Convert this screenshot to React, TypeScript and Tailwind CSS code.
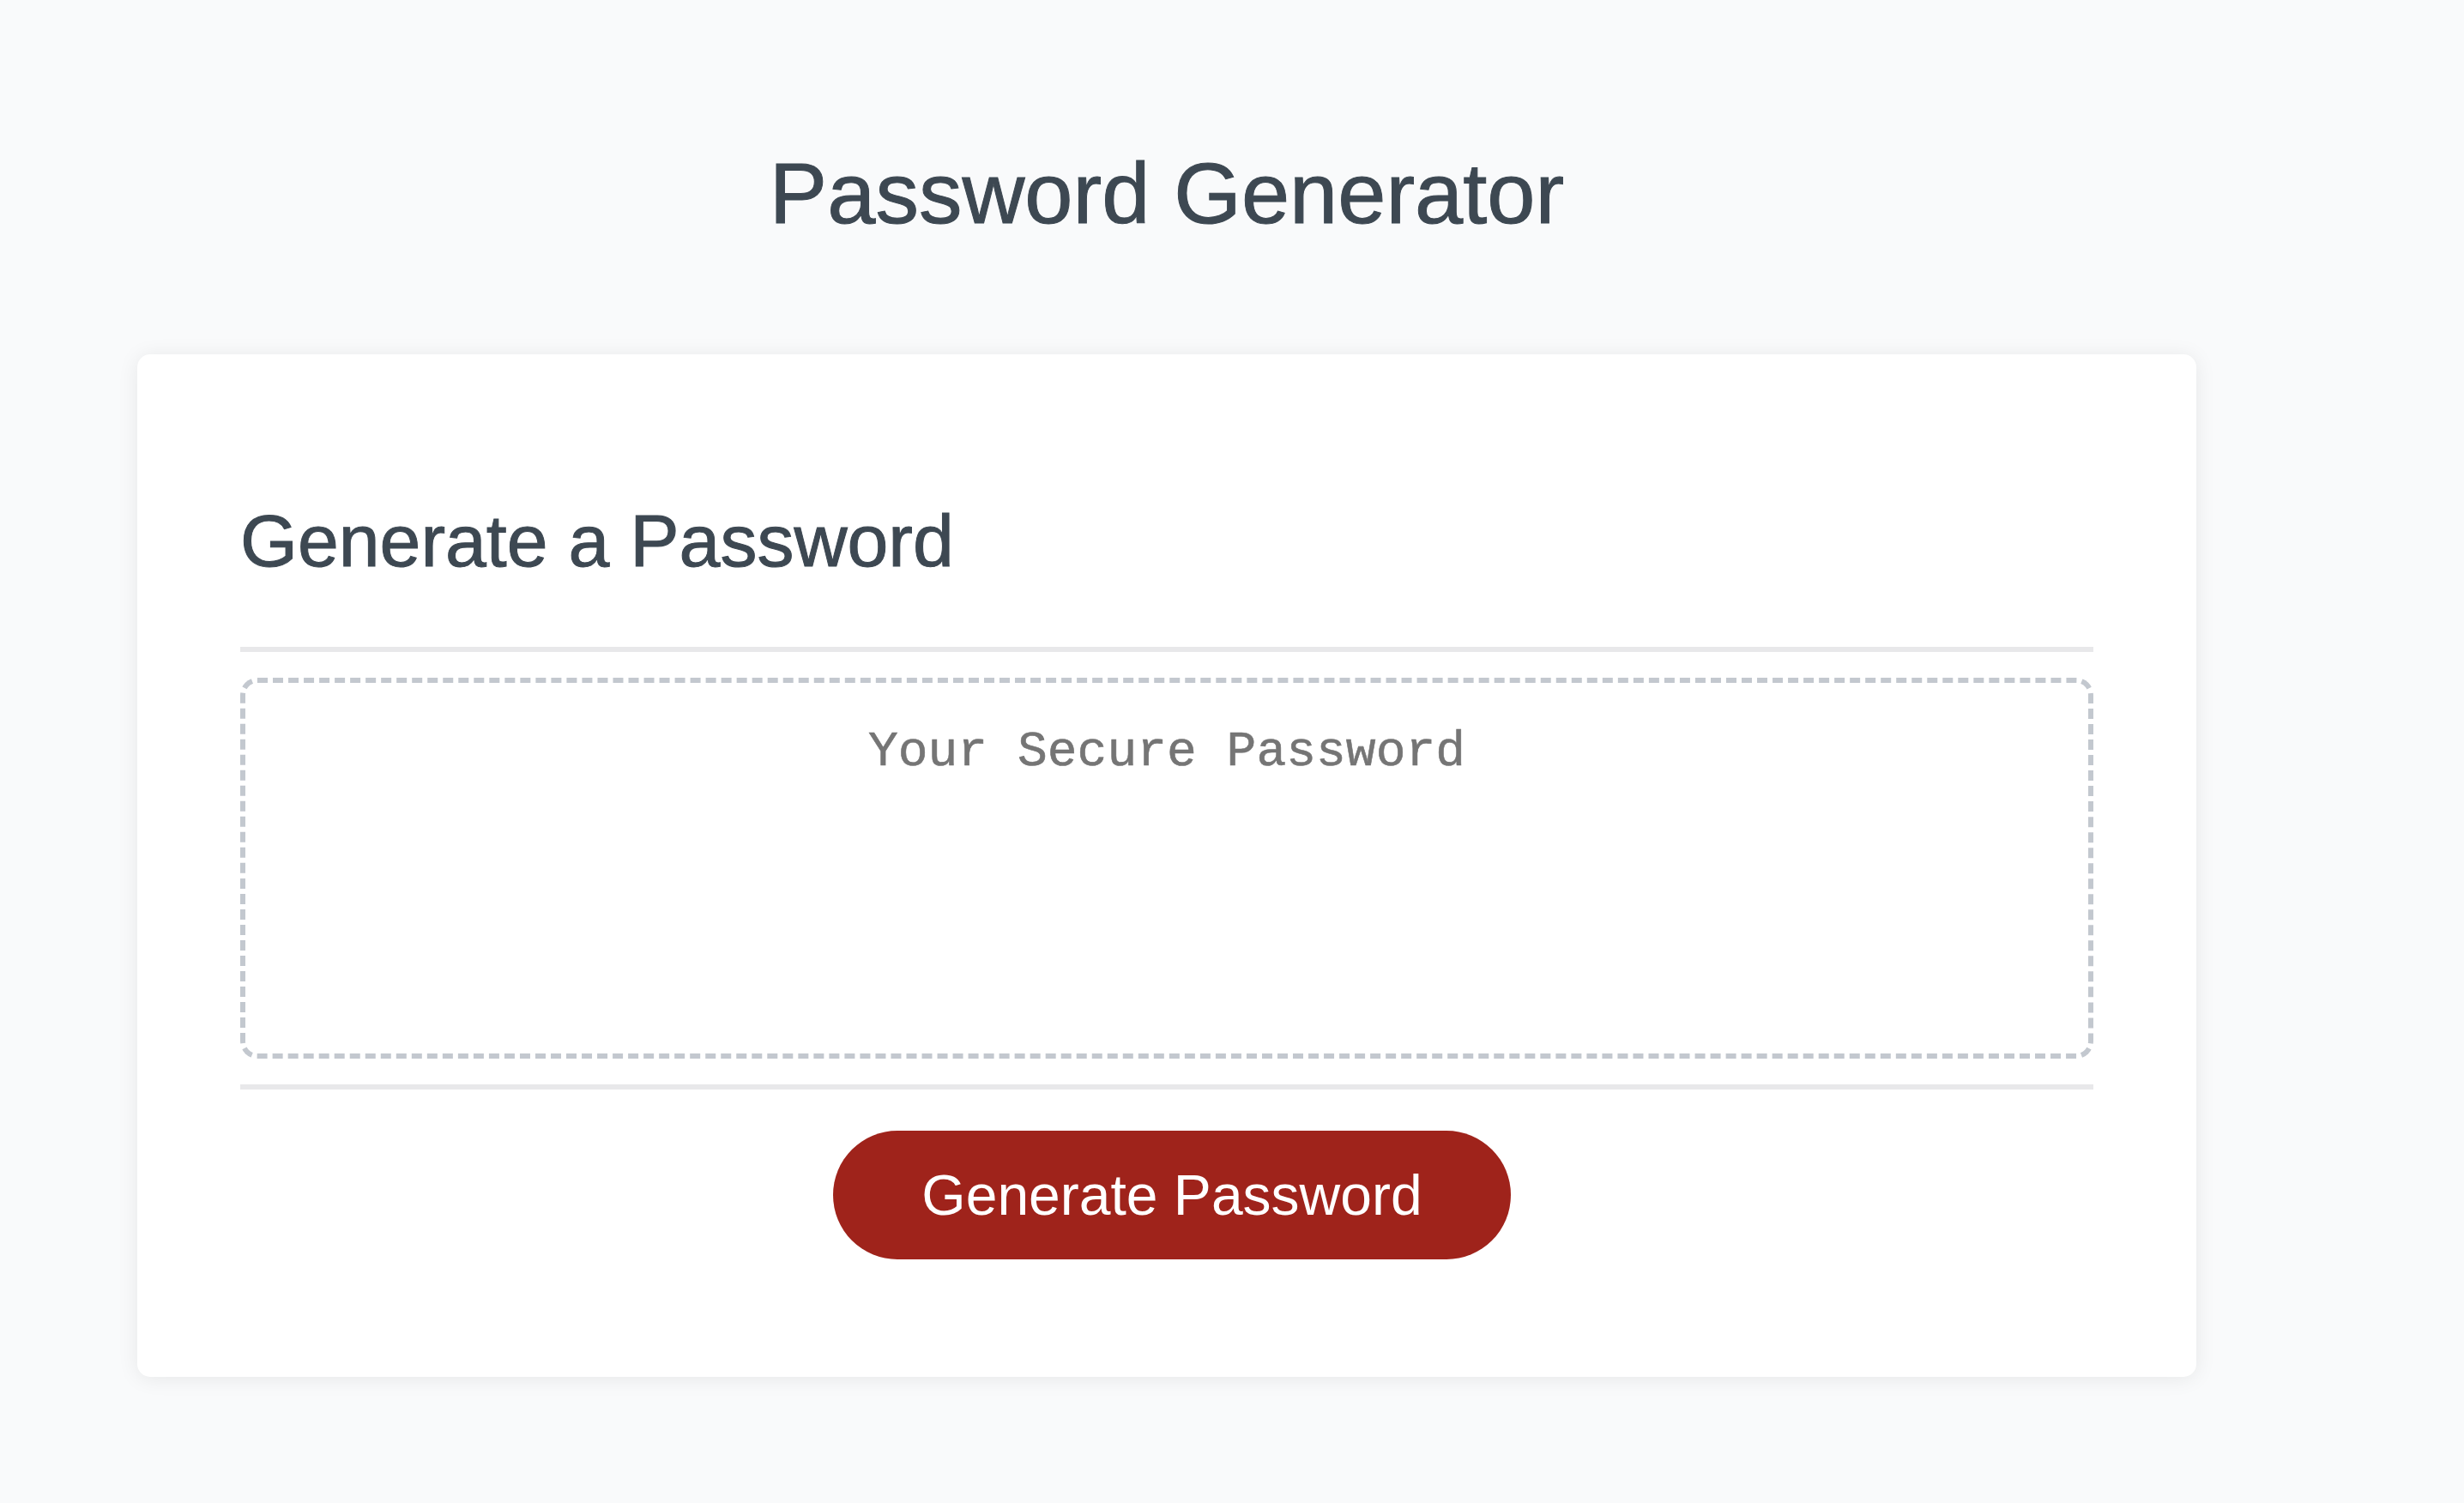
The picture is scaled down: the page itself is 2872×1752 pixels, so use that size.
export default function App() {
  return (
    <div className="min-h-screen bg-[#f9fafb] pt-[175px] pl-[160px] font-['Liberation_Sans',Arial,sans-serif] text-[#3d4852]">
      <div className="w-[2400px]">
        <h1 className="text-center text-[101px] font-normal leading-none [-webkit-text-stroke:1px_#3d4852]">
          Password Generator
        </h1>

        {/* Card */}
        <div className="mt-[137px] rounded-[15px] bg-white px-[120px] pt-[174px] pb-[137px] shadow-[0_2px_24px_rgba(0,0,0,0.08)]">
          <h2 className="text-[86px] font-normal leading-none [-webkit-text-stroke:1px_#3d4852]">Generate a Password</h2>

          <div className="mt-[81px] h-[6px] bg-[#e8e8ea]" />

          <div className="mt-[30px] h-[444px] rounded-[20px] border-[6px] border-dashed border-[#c3c8cf] pt-[46px] text-center font-['Liberation_Mono','Courier_New',monospace] text-[58px] leading-[1.2] text-[#757575] [-webkit-text-stroke:0.6px_#757575]">
            Your Secure Password
          </div>

          <div className="mt-[30px] h-[6px] bg-[#e8e8ea]" />

          <div className="mt-[48px] flex justify-center pl-[12px]">
            <button className="h-[150px] rounded-full bg-[#9f231b] px-[103px] text-[66px] leading-none text-white">
              Generate Password
            </button>
          </div>
        </div>
      </div>
    </div>
  );
}
